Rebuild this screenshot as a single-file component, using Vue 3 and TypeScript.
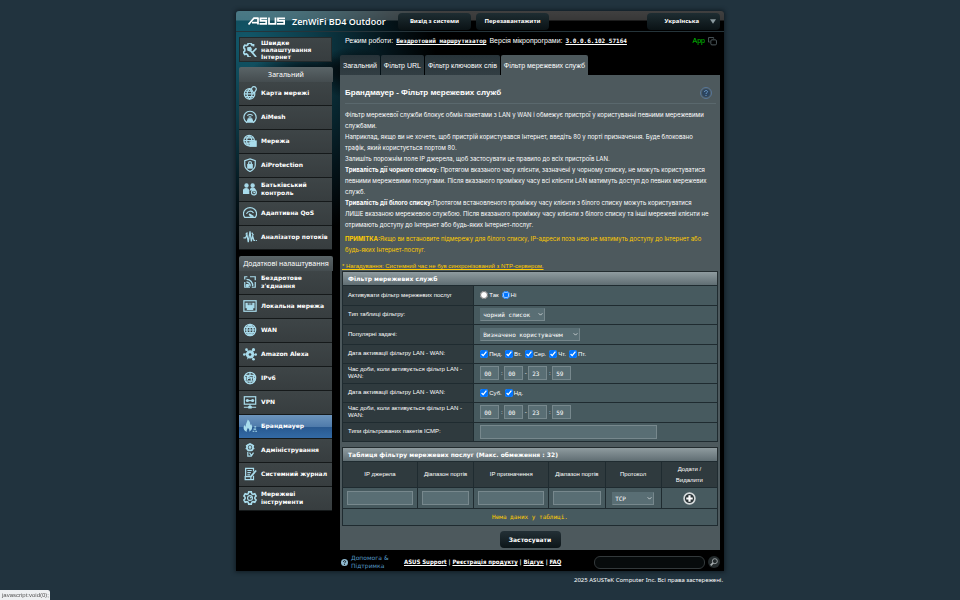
<script setup lang="ts">
import { ref } from 'vue'

interface MenuItem {
  label: string
  icon: string
  active?: boolean
}

const icons: Record<string, string> = {
  quick:
    '<path d="M12 4V2h-2L9 0H6L5.500 2 4 3 2 2.500.500 5 2 7v2L.500 10.500 2 13l2-.500L5.500 14l.5 2h3" stroke-width="2"/><path d="M7 7l8 9M15.500 6L10 11.500" stroke-width="2"/><path d="M5.500 5.500l3-.500 1 2-2 2-2-1z" fill="currentColor"/>',
  map:
    '<circle cx="7.500" cy="9" r="6"/><path d="M1.500 9h12M2.500 6h8M2.500 12h10M7.500 3c-4 4-4 8 0 12M7.500 3c4 4 4 8 0 12"/><path d="M12.500 8.500L10 4.500a2.700 2.700 0 1 1 5 0z" fill="#3b4143"/>',
  mesh:
    '<path d="M4.500 14.500A7 7 0 1 1 11.500 14.500"/><path d="M3.500 14h9M5 6.500a4 4 0 0 1 6 0M6.500 8.500a2 2 0 0 1 3 0"/><path d="M5 13l1-3h4l1 3z" fill="currentColor"/>',
  network:
    '<circle cx="7" cy="7.500" r="6"/><path d="M1 7.500h12M2 4.500h10M2 10.500h6M7 1.500c-4 4-4 8 0 12M7 1.500c3 3 3.500 5 3.300 8"/><rect x="8" y="9" width="4" height="5" fill="currentColor"/><rect x="13" y="8" width="2" height="6" fill="currentColor"/>',
  shield:
    '<path d="M8 1l6 2v5c0 4-3 6-6 7.500C5 14 2 12 2 8V3z"/><rect x="5.500" y="7.500" width="5" height="4" fill="currentColor"/><path d="M6.500 7.500V5.500a1.500 1.500 0 0 1 3 0v2"/>',
  family:
    '<g fill="currentColor"><circle cx="4" cy="4" r="1.800"/><circle cx="11" cy="4" r="1.800"/><path d="M0.500 13V9.500C1 7 6 7 6.500 9.500V13zM8.500 9C9 6.500 13 6.500 14 9z"/></g><circle cx="12.500" cy="12" r="2.800"/><path d="M12.500 10.500v1.700h1.500"/>',
  gauge:
    '<path d="M2 13A7.500 7 0 1 1 14 13z"/><path d="M4 9a4.500 4.500 0 0 1 8-1"/><path d="M7 9l5 3-3.500-.5z" fill="currentColor"/>',
  pulse:
    '<path d="M0.500 9H3l1.500-4L6 14 8 1.500 9.500 13l1.500-6 1.500 5H14M15 12h1"/><path d="M3 5l2-2M10 3l2 3"/>',
  wireless:
    '<path d="M2 8v6h6M14 8v6h-4M2 5V2h3M8 2h6v4"/><path d="M4 5a7 7 0 0 1 7 8M4 8a4 4 0 0 1 4 5" stroke-width="1.600"/><circle cx="5" cy="12" r="1.300" fill="currentColor"/>',
  lan:
    '<rect x="1" y="2" width="14" height="12"/><path d="M3.500 5h9v5H11v2H5v-2H3.500z" fill="currentColor"/><path d="M6 4v3M8 4v3M10 4v3" stroke="#3b4143" stroke-width="1"/>',
  wan:
    '<circle cx="8" cy="8" r="6.500"/><path d="M1.500 8h13M2.500 5h11M2.500 11h11M8 1.500v13M8 1.500c-5 4-5 9 0 13M8 1.500c5 4 5 9 0 13"/>',
  alexa:
    '<circle cx="8" cy="8.500" r="4" fill="currentColor"/><path d="M8 8L2 8M8 8l6 1M8 8L4 3M8 8l4-5M8 8l-3 6M8 8l4 6" stroke-width="1"/><g fill="currentColor" stroke="none"><circle cx="1.500" cy="8.500" r="1.500"/><circle cx="14.500" cy="8.500" r="1.500"/><circle cx="4" cy="3" r="1.500"/><circle cx="12" cy="3" r="1.800"/><circle cx="12" cy="14" r="1.500"/></g><circle cx="8" cy="8.500" r="1.500" fill="#3b4143" stroke="none"/>',
  ipv6:
    '<circle cx="8" cy="8" r="6.500"/><path d="M2.500 5h11M2.500 11.500h11M8 1.500v3M8 12v3"/><path d="M3 6.500v4M5 10.500v-4h2v2H5M8.500 6.500L9.500 10l1-3.500M13.500 6.500H12v4h1.500v-2H12"/>',
  vpn:
    '<rect x="1.500" y="2" width="13" height="8.500"/><path d="M8 10.500V14M1 14h14M4 6.300h8" /><g fill="currentColor" stroke="none"><circle cx="5" cy="6.300" r="1.800"/><circle cx="11" cy="6.300" r="1.800"/><rect x="6" y="12.500" width="4" height="3"/></g>',
  fire:
    '<path d="M4.500 14.500C0 13 0 9 2 6.500c0 1.500.5 2 1 2C3 5 5 3 5.500.500c2.500 2 3 4.500 2.500 6.500.8-.3 1-1 1-1.500 2 2.500 2.500 7-2 9 1-2-.2-3-1.500-4.500 0 2-2 2.500-1 4.500z" fill="currentColor" stroke="none"/><path d="M11 14h2M14 14h2M12 11.500h3M13 9h2"/>',
  admin:
    '<circle cx="8" cy="5" r="3.500" stroke-width="2"/><path d="M8 0v2M3.500 2.500L5 4M12.500 2.500L11 4M3 6.500l2-.5M13 6.500L11 6"/><circle cx="8" cy="5" r="1" fill="currentColor"/><path d="M5.500 10v5h4l2.500-4M7.500 11l2 3"/>',
  log:
    '<path d="M3 11V1.500h9V5M12 10v4.500H2.500V11H9v3.500"/><path d="M5 4h5M5 6.500h4M5 9h3"/><path d="M9 11l6-7" stroke-width="2"/>',
  tools:
    '<path d="M6.500 1h3l.5 2 1.500.8 2-.6 1.500 2.600L13.600 7.200v1.600L15 10.200l-1.500 2.600-2-.6L10 13l-.5 2h-3L6 13l-1.500-.8-2 .6L1 10.200l1.400-1.400V7.200L1 5.800l1.500-2.600 2 .6L6 3z" stroke-width="1.800"/><circle cx="8" cy="8" r="2.800"/><path d="M8 8l2-1.500" />',
}

const general: MenuItem[] = [
  { label: 'Карта мережі', icon: 'map' },
  { label: 'AiMesh', icon: 'mesh' },
  { label: 'Мережа', icon: 'network' },
  { label: 'AiProtection', icon: 'shield' },
  { label: 'Батьківський контроль', icon: 'family' },
  { label: 'Адаптивна QoS', icon: 'gauge' },
  { label: 'Аналізатор потоків', icon: 'pulse' },
]

const advanced: MenuItem[] = [
  { label: "Бездротове з'єднання", icon: 'wireless' },
  { label: 'Локальна мережа', icon: 'lan' },
  { label: 'WAN', icon: 'wan' },
  { label: 'Amazon Alexa', icon: 'alexa' },
  { label: 'IPv6', icon: 'ipv6' },
  { label: 'VPN', icon: 'vpn' },
  { label: 'Брандмауер', icon: 'fire', active: true },
  { label: 'Адміністрування', icon: 'admin' },
  { label: 'Системний журнал', icon: 'log' },
  { label: 'Мережеві інструменти', icon: 'tools' },
]

const groups = [
  { title: 'Загальний', items: general },
  { title: 'Додаткові налаштування', items: advanced },
]

const tabs = ['Загальний', 'Фільтр URL', 'Фільтр ключових слів', 'Фільтр мережевих служб']

const enabled = ref('no')
const weekdays = ref([
  { label: 'Пнд.', on: true },
  { label: 'Вт.', on: true },
  { label: 'Сер.', on: true },
  { label: 'Чт.', on: true },
  { label: 'Пт.', on: true },
])
const weekend = ref([
  { label: 'Суб.', on: true },
  { label: 'Нд.', on: true },
])
const weekdayTime = ref(['00', '00', '23', '59'])
const weekendTime = ref(['00', '00', '23', '59'])
const separators = [':', '-', ':', '']
const icmp = ref('')
const search = ref('')
const draft = ref({ srcIp: '', srcPort: '', dstIp: '', dstPort: '' })
</script>

<template>
  <div class="page">
    <div class="frame">
      <header class="top">
        <svg class="logo" viewBox="0 0 74 16" role="img" aria-label="ASUS">
          <g fill="none" stroke="#fff" stroke-width="3.500">
            <path d="M1 15L12 2h8M20 1v14M8 11h11" />
            <path d="M38 2.500H25v5h11.500v6H23" />
            <path d="M42 1v12.500h13V1" />
            <path d="M74 2.500H60v5h12.500v6H58" />
          </g>
        </svg>
        <span class="model">ZenWiFi BD4 Outdoor</span>
        <button class="top-btn logout" type="button">Вихід з системи</button>
        <button class="top-btn reboot" type="button">Перезавантажити</button>
        <button class="top-btn lang" type="button">
          Українська
          <svg viewBox="0 0 8 6"><path d="M0 0h8L4 6z" fill="#8b9a9f" /></svg>
        </button>
      </header>

      <div class="body">
        <nav class="side">
          <a href="#" class="item quick">
            <svg viewBox="0 0 16 16" class="ico" v-html="icons.quick"></svg>
            <span>Швидке налаштування Інтернет</span>
          </a>
          <section v-for="g in groups" :key="g.title" class="group">
            <h2>{{ g.title }}</h2>
            <a v-for="m in g.items" :key="m.label" href="#" class="item" :class="{ active: m.active }">
              <svg viewBox="0 0 16 16" class="ico" v-html="icons[m.icon]"></svg>
              <span>{{ m.label }}</span>
            </a>
          </section>
        </nav>

        <main class="main">
          <div class="status">
            <span>Режим роботи:</span>
            <a href="#" class="value">Бездротовий маршрутизатор</a>
            <span>Версія мікропрограми:</span>
            <a href="#" class="value">3.0.0.6.102_57164</a>
            <span class="app">App</span>
            <svg class="copy" viewBox="0 0 16 16" fill="none" stroke="#59666b" stroke-width="1.500">
              <path d="M3 9H1V1h9v2" /><rect x="5" y="5" width="10" height="9" rx="2" />
            </svg>
          </div>

          <div class="tabs">
            <a v-for="(t, i) in tabs" :key="t" href="#" class="tab" :class="{ on: i === 3 }">{{ t }}</a>
          </div>

          <div class="panel">
            <div class="title">
              <h1>Брандмауер - Фільтр мережевих служб</h1>
              <svg class="help" viewBox="0 0 24 24" fill="none">
                <circle cx="12" cy="12" r="11" stroke="#58779a" stroke-width="2" />
                <circle cx="12" cy="12" r="8" fill="#2c4560" />
                <path d="M9 10c0-4 6-4 6-.5 0 2-3 2-3 4.500M12 16v2" stroke="#6f9ccb" stroke-width="2" />
              </svg>
            </div>

            <p class="desc">
              Фільтр мережевої служби блокує обмін пакетами з LAN у WAN і обмежує пристрої у користуванні певними мережевими<br />
              службами.<br />
              Наприклад, якщо ви не хочете, щоб пристрій користувався Інтернет, введіть 80 у порті призначення. Буде блоковано<br />
              трафік, який користується портом 80.<br />
              Залишіть порожнім поле IP джерела, щоб застосувати це правило до всіх пристроїв LAN.<br />
              <b>Тривалість дії чорного списку:</b> Протягом вказаного часу клієнти, зазначені у чорному списку, не можуть користуватися<br />
              певними мережевими послугами. Після вказаного проміжку часу всі клієнти LAN матимуть доступ до певних мережевих<br />
              служб.<br />
              <b>Тривалість дії білого списку:</b>Протягом встановленого проміжку часу клієнти з білого списку можуть користуватися<br />
              ЛИШЕ вказаною мережевою службою. Після вказаного проміжку часу клієнти з білого списку та інші мережеві клієнти не<br />
              отримають доступу до Інтернет або будь-яких Інтернет-послуг.
            </p>
            <p class="desc note">
              <b>ПРИМІТКА:</b>Якщо ви встановите підмережу для білого списку, IP-адреси поза нею не матимуть доступу до Інтернет або<br />
              будь-яких Інтернет-послуг.
            </p>
            <a href="#" class="remind">* Нагадування: Системний час не був синхронізований з NTP-сервером.</a>

            <h3 class="bar">Фільтр мережевих служб</h3>
            <table class="form">
              <tbody>
                <tr>
                  <th scope="row">Активувати фільтр мережевих послуг</th>
                  <td>
                    <div class="line picks">
                      <label><input v-model="enabled" type="radio" name="enable" value="yes" />Так</label>
                      <label><input v-model="enabled" type="radio" name="enable" value="no" />Ні</label>
                    </div>
                  </td>
                </tr>
                <tr>
                  <th scope="row"><label for="list-type">Тип таблиці фільтру:</label></th>
                  <td>
                    <div class="select short">
                      <select id="list-type"><option>чорний список</option><option>білий список</option></select>
                      <svg viewBox="0 0 8 8"><path d="M1 2l3 3 3-3" /></svg>
                    </div>
                  </td>
                </tr>
                <tr>
                  <th scope="row"><label for="known">Популярні задачі:</label></th>
                  <td>
                    <div class="select long">
                      <select id="known"><option>Визначено користувачем</option></select>
                      <svg viewBox="0 0 8 8"><path d="M1 2l3 3 3-3" /></svg>
                    </div>
                  </td>
                </tr>
                <tr>
                  <th scope="row">Дата активації фільтру LAN - WAN:</th>
                  <td>
                    <div class="line picks">
                      <label v-for="d in weekdays" :key="d.label"><input v-model="d.on" type="checkbox" />{{ d.label }}</label>
                    </div>
                  </td>
                </tr>
                <tr>
                  <th scope="row">Час доби, коли активується фільтр LAN - WAN:</th>
                  <td>
                    <div class="line time">
                      <template v-for="(s, i) in separators" :key="i">
                        <input v-model="weekdayTime[i]" type="text" maxlength="2" aria-label="Час доби" /><i>{{ s }}</i>
                      </template>
                    </div>
                  </td>
                </tr>
                <tr>
                  <th scope="row">Дата активації фільтру LAN - WAN:</th>
                  <td>
                    <div class="line picks">
                      <label v-for="d in weekend" :key="d.label"><input v-model="d.on" type="checkbox" />{{ d.label }}</label>
                    </div>
                  </td>
                </tr>
                <tr>
                  <th scope="row">Час доби, коли активується фільтр LAN - WAN:</th>
                  <td>
                    <div class="line time">
                      <template v-for="(s, i) in separators" :key="i">
                        <input v-model="weekendTime[i]" type="text" maxlength="2" aria-label="Час доби" /><i>{{ s }}</i>
                      </template>
                    </div>
                  </td>
                </tr>
                <tr>
                  <th scope="row"><label for="icmp">Типи фільтрованих пакетів ICMP:</label></th>
                  <td><input id="icmp" v-model="icmp" class="icmp" type="text" /></td>
                </tr>
              </tbody>
            </table>

            <h3 class="bar second">Таблиця фільтру мережевих послуг (Макс. обмеження : 32)</h3>
            <table class="rules">
              <colgroup>
                <col class="c-ip" /><col class="c-port" /><col class="c-ip" /><col class="c-port" /><col class="c-proto" /><col />
              </colgroup>
              <thead>
                <tr>
                  <th>IP джерела</th>
                  <th>Діапазон портів</th>
                  <th>IP призначення</th>
                  <th>Діапазон портів</th>
                  <th>Протокол</th>
                  <th>Додати /<br />Видалити</th>
                </tr>
              </thead>
              <tbody>
                <tr class="entry">
                  <td><input v-model="draft.srcIp" type="text" aria-label="IP джерела" /></td>
                  <td><input v-model="draft.srcPort" type="text" aria-label="Діапазон портів" /></td>
                  <td><input v-model="draft.dstIp" type="text" aria-label="IP призначення" /></td>
                  <td><input v-model="draft.dstPort" type="text" aria-label="Діапазон портів" /></td>
                  <td>
                    <div class="select proto">
                      <select aria-label="Протокол"><option>TCP</option><option>UDP</option></select>
                      <svg viewBox="0 0 8 8"><path d="M1 2l3 3 3-3" /></svg>
                    </div>
                  </td>
                  <td>
                    <button class="add" type="button" aria-label="Додати">
                      <svg viewBox="0 0 24 24">
                        <circle cx="12" cy="12" r="10" fill="#2b3437" stroke="#d5dadb" stroke-width="3" />
                        <path d="M12 6v12M6 12h12" stroke="#fff" stroke-width="4" />
                      </svg>
                    </button>
                  </td>
                </tr>
                <tr class="empty"><td colspan="6">Нема даних у таблиці.</td></tr>
              </tbody>
            </table>

            <button class="apply" type="button">Застосувати</button>
          </div>
        </main>
      </div>

      <footer class="foot">
        <a href="#" class="support">
          <svg viewBox="0 0 16 16"><circle cx="8" cy="8" r="8" fill="#8fb9cf" /><path d="M5.500 6.500c0-3.500 5-3.500 5-.5 0 2-2.500 2-2.500 4M8 11.500v2" fill="none" stroke="#05090b" stroke-width="2" /></svg>
          <span>Допомога &amp; Підтримка</span>
        </a>
        <div class="links">
          <a href="#">ASUS Support</a> | <a href="#">Реєстрація продукту</a> | <a href="#">Відгук</a> | <a href="#">FAQ</a>
        </div>
        <input v-model="search" class="search" type="text" aria-label="FAQ" />
        <button class="find" type="button" aria-label="FAQ">
          <svg viewBox="0 0 12 12" fill="none" stroke="#a9b0b2"><circle cx="7" cy="5" r="3" /><path d="M5 7l-3 3" stroke-width="2" /></svg>
        </button>
      </footer>
    </div>
    <p class="copyright">2025 ASUSTeK Computer Inc. Всі права застережені.</p>
    <div class="hint">javascript:void(0);</div>
  </div>
</template>

<style>
body {
  background: #21333e;
}
</style>

<style scoped>
.page {
  min-height: 100vh;
  box-sizing: border-box;
  padding: 11px 16px 0;
  color: #fff;
  font: 6px/8px "Liberation Sans", Arial, sans-serif;
}
.page *,
.page *::before {
  box-sizing: border-box;
}
a {
  color: inherit;
}
h1,
h2,
h3,
p {
  margin: 0;
}
button,
input,
select {
  font: inherit;
  color: inherit;
  margin: 0;
}
.frame {
  max-width: 488px;
  margin: 0 auto;
  border-radius: 3px 3px 0 0;
  background:
    radial-gradient(ellipse 40px 26px at 118px 62px, #02090c 20%, transparent),
    radial-gradient(ellipse 60px 14px at 75px 58px, #04141b 10%, transparent),
    radial-gradient(ellipse 190px 210px at 10px 30px, #12586a 0%, #0d3c49 35%, #04141a 75%, transparent),
    #000;
  box-shadow: 0 0 4px 1px #101b22;
}
.top {
  display: flex;
  align-items: flex-start;
  height: 21px;
  border-bottom: 1px solid #25343a;
  border-radius: 3px 3px 0 0;
  padding: 2px 4px 0 12px;
  background: linear-gradient(#ffffff40 0, #ffffff38 9px, transparent 10px);
}
.logo {
  width: 37px;
  height: 8px;
  margin: 4px 7px 0 0;
}
.model {
  flex: none;
  width: 106px;
  font: 600 9px/17px "Open Sans", "Noto Sans", sans-serif;
  white-space: nowrap;
}
.top-btn {
  border: 0;
  height: 17px;
  padding: 0;
  border-radius: 4px;
  background: linear-gradient(#1e2d32, #0a1215);
  font: bold 6px/17px "Noto Sans", sans-serif;
  white-space: nowrap;
}
.logout {
  width: 73px;
}
.reboot {
  width: 73px;
  margin-left: 5px;
}
.lang {
  width: 73px;
  margin-left: auto;
  display: flex;
  align-items: center;
  justify-content: flex-end;
  gap: 11px;
  padding-right: 4px;
}
.lang svg {
  width: 6px;
  height: 5px;
}
.body {
  display: flex;
  gap: 7px;
  padding: 0 4px 0 3px;
}
.side {
  flex: none;
  width: 94px;
  padding-top: 5px;
}
.item {
  display: flex;
  align-items: center;
  gap: 4px;
  height: 24px;
  padding: 0 0 2px 4px;
  margin-right: 1px;
  border-bottom: 1px solid #15191a;
  background: linear-gradient(#3e4547, #373d3f);
  font: bold 6px/8px "DejaVu Sans", sans-serif;
  text-decoration: none;
}
.item.active {
  background: linear-gradient(#6d95bd 0, #4f7bab 50%, #28588f 51%, #336aa5);
}
.ico {
  flex: none;
  width: 14px;
  height: 14px;
  fill: none;
  stroke: currentColor;
  color: #a9dcec;
  stroke-width: 1.4;
}
.quick {
  height: 25px;
  line-height: 7px;
  border: 1px solid #22292b;
  padding: 0 0 0 3px;
}
.group {
  margin-top: 5px;
}
.group + .group {
  margin-top: 6px;
}
.group h2 {
  height: 15px;
  border-radius: 2px 2px 0 0;
  background: linear-gradient(#5a6467, #444c4f);
  font: 7px/16px "Noto Sans", sans-serif;
  text-align: center;
  white-space: nowrap;
}
.main {
  flex: 1;
  min-width: 0;
}
.status {
  display: flex;
  align-items: center;
  gap: 3px;
  height: 18px;
  padding: 0 3px 0 5px;
  font-size: 7px;
  line-height: 18px;
  white-space: nowrap;
}
.value {
  font: bold 6px/18px "DejaVu Sans Mono", monospace;
}
.app {
  margin-left: auto;
  color: #00c800;
}
.copy {
  width: 9px;
  height: 9px;
}
.tabs {
  display: flex;
  gap: 1px;
  padding-top: 5px;
}
.tab {
  height: 20px;
  padding: 0 3px;
  border-radius: 2px 2px 0 0;
  background: linear-gradient(#273339, #323e43);
  font-size: 7px;
  line-height: 21px;
  text-decoration: none;
  white-space: nowrap;
}
.tab.on {
  background: #4d595d;
}
.panel {
  display: flow-root;
  padding: 0 2px 2px;
  background: #4d595d;
}
.title {
  display: flex;
  align-items: center;
  justify-content: space-between;
  height: 29px;
  margin: 0 2px 0 3px;
  padding: 7px 4px 0 0;
  border-bottom: 1px solid #5a686d;
}
.title h1 {
  font: bold 8px/12px "Liberation Sans", Arial, sans-serif;
}
.help {
  flex: none;
  width: 12px;
  height: 12px;
}
.desc {
  margin: 5px 0 0 3px;
  font: 6px/11px Inter, "Liberation Sans", sans-serif;
  white-space: nowrap;
}
.note {
  margin-top: 3px;
  color: #fc0;
}
.remind {
  display: block;
  margin-top: 6px;
  line-height: 10px;
  color: #fc0;
}
.bar {
  height: 14px;
  padding-left: 5px;
  border: 1px solid #232c2f;
  border-bottom: 0;
  background: linear-gradient(#8f9b9f, #606e73);
  font: bold 6px/13px "DejaVu Sans", sans-serif;
}
.second {
  margin-top: 5px;
}
table {
  width: 100%;
  border-collapse: collapse;
  table-layout: fixed;
}
.form {
  height: 157px;
  background: #475a5f;
}
.form tr {
  height: 19px;
}
.form th,
.form td {
  padding: 0 5px;
  border: 1px solid #1f2b30;
  text-align: left;
  font-weight: normal;
}
.form td {
  padding-left: 6px;
}
.form th {
  width: 35%;
  background: #2f3a3e;
  line-height: 7px;
}
.line {
  display: flex;
  align-items: center;
}
.picks {
  gap: 3px;
}
.picks label {
  display: flex;
  align-items: center;
  gap: 1px;
}
.picks input {
  width: 8px;
  height: 8px;
}
input[type="text"] {
  border: 1px solid #77888d;
  background: #596e74;
  outline: none;
}
.time input {
  width: 19px;
  height: 14px;
  padding: 0 3px;
  font: 6px/12px "DejaVu Sans Mono", monospace;
}
.time i {
  width: 5px;
  text-align: center;
  font-style: normal;
}
.icmp {
  display: block;
  width: 177px;
  height: 14px;
}
.select {
  position: relative;
}
.select svg {
  position: absolute;
  right: 2px;
  top: 4px;
  width: 5px;
  height: 5px;
  fill: none;
  stroke: #fff;
  pointer-events: none;
}
select {
  appearance: none;
  display: block;
  width: 100%;
  height: 13px;
  padding: 0 2px;
  border: 1px solid #77888d;
  border-left-color: #596e74;
  border-top-color: #596e74;
  border-radius: 0;
  background: #596e74;
  font: 6px/11px "DejaVu Sans Mono", monospace;
}
.short {
  width: 65px;
}
.long {
  width: 100px;
}
.proto {
  width: 42px;
  margin: 0 auto;
}
.rules {
  background: #475a5f;
}
.c-ip {
  width: 20%;
}
.c-port {
  width: 15%;
}
.c-proto {
  width: 15%;
}
.rules th,
.rules td {
  padding: 0 4px;
  border: 1px solid #1f2b30;
  text-align: center;
}
.rules th {
  height: 26px;
  background: #2f3a3e;
  font-weight: normal;
  line-height: 11px;
}
.entry td {
  height: 21px;
}
.entry input {
  display: block;
  width: 100%;
  height: 14px;
}
.add {
  display: block;
  margin: 0 auto;
  padding: 0;
  border: 0;
  background: none;
}
.add svg {
  display: block;
  width: 13px;
  height: 13px;
}
.rules .empty td {
  height: 17px;
  color: #fc0;
  font: 6px/16px "DejaVu Sans Mono", monospace;
}
.apply {
  display: block;
  width: 61px;
  height: 17px;
  margin: 5px auto 0;
  padding: 0;
  border: 0;
  border-radius: 4px;
  background: linear-gradient(#233036, #0c1518);
  font: bold 6px/17px "DejaVu Sans", sans-serif;
}
.foot {
  display: flex;
  align-items: center;
  height: 21px;
  padding: 3px 4px 0 105px;
}
.support {
  display: flex;
  align-items: center;
  gap: 3px;
  width: 63px;
  color: #569ac7;
  font: 6px/8px "DejaVu Sans", sans-serif;
  text-decoration: none;
}
.support svg {
  flex: none;
  width: 7px;
  height: 7px;
}
.support span {
  width: 40px;
}
.links {
  flex: 1;
  font: bold 6px/8px "DejaVu Sans Condensed", "Noto Sans", sans-serif;
  white-space: nowrap;
}
.foot .search {
  width: 111px;
  height: 13px;
  border: 1px solid #33393b;
  border-radius: 6px;
  background: #070b0c;
  padding: 0 5px;
}
.find {
  width: 12px;
  height: 12px;
  margin-left: 3px;
  padding: 1px;
  border: 0;
  border-radius: 50%;
  background: #242b2d;
}
.find svg {
  display: block;
  width: 10px;
  height: 10px;
}
.copyright {
  max-width: 488px;
  margin: 5px auto 0;
  padding-right: 1px;
  text-align: right;
  font: 6px/8px "Noto Sans", sans-serif;
}
.hint {
  position: fixed;
  left: 0;
  bottom: 0;
  height: 10px;
  width: 50px;
  padding-left: 2px;
  border-radius: 0 2px 0 0;
  background: #eef0f2;
  color: #555;
  line-height: 11px;
}
</style>
